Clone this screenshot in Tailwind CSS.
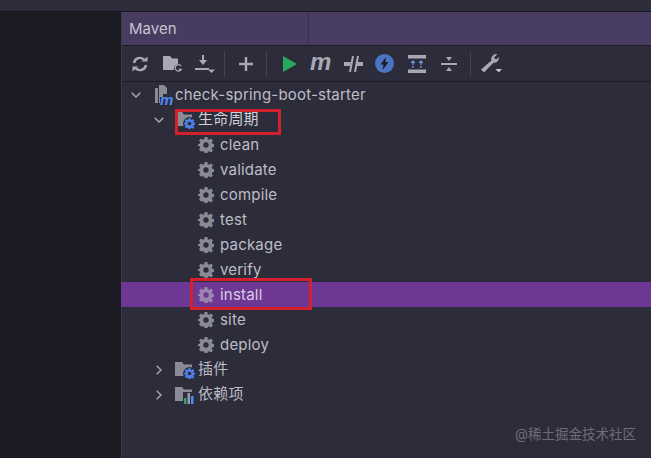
<!doctype html>
<html>
<head>
<meta charset="UTF-8">
<title>Maven</title>
<script src="https://cdn.jsdelivr.net/npm/@tailwindcss/browser@4"></script>
</head>
<body class="bg-[#2d2c3a]">
<svg class="hidden">
  <symbol id="gear" viewBox="0 0 16 16"><path fill="currentColor" fill-rule="evenodd" d="M6.600 0h2.800l.4 2.200 1.300.6L13 1.500l2 2-1.300 1.900.6 1.300 2.200.4v2.800l-2.200.4-.6 1.300 1.300 1.900-2 2-1.900-1.300-1.300.6-.4 2.200H6.600l-.4-2.200-1.300-.6L3 14.500l-2-2 1.300-1.900-.6-1.300L0 8.900V7.100l1.700-.4.6-1.300L1 3.500l2-2 1.900 1.300 1.300-.6zM8 5.300a2.700 2.700 0 1 0 0 5.400 2.700 2.700 0 0 0 0-5.400z"/></symbol>
  <symbol id="folder" viewBox="0 0 18 16"><path fill="#8b8b98" d="M0 1h7l2 2.500h8V15H0z"/></symbol>
  <symbol id="chev-d" viewBox="0 0 10 6"><path fill="none" stroke="#a9a9b4" stroke-width="1.400" d="M.7.700 5 5l4.300-4.300"/></symbol>
  <symbol id="chev-r" viewBox="0 0 6 10"><path fill="none" stroke="#a9a9b4" stroke-width="1.400" d="M.7.700 5 5 .7 9.300"/></symbol>
</svg>

<div class="h-[458px] flex flex-col overflow-hidden font-['Inter','Noto_Sans_CJK_SC',sans-serif] relative">
  <div class="h-3 shrink-0 bg-[#2e2d3b] border-b border-[#17161e]"></div>
  <div class="flex flex-1 min-h-0">
    <div class="w-[121px] shrink-0 bg-[#1c1b24]"></div>
    <div class="flex-1 flex flex-col border-l border-[#3a3948] bg-[#2d2c3a]">
      <!-- title -->
      <div class="h-[34px] shrink-0 flex bg-[#483b60] border-b border-[#1e1d26] text-[#c6c3cf] text-[15px]">
        <div class="w-[187px] pl-[7px] flex items-center border-r border-[#3a3050]"><span class="translate-y-px">Maven</span></div>
        <div class="flex-1 bg-[#493c62]"></div>
      </div>
      <!-- toolbar -->
      <div class="h-[36px] shrink-0 flex items-center pl-[10px] border-b border-[#1e1d26] text-[#a9a9b6]">
        <svg class="w-4 h-4" viewBox="0 0 16 16" fill="none" stroke="currentColor" stroke-width="2.400"><path d="M2 7a6 6 0 0 1 10.500-3M14 9a6 6 0 0 1-10.500 3"/><path fill="currentColor" stroke="none" d="M9.500 5.500h6v-5zM6.500 10.500h-6v5z"/></svg>
        <svg class="w-[20px] h-[18px] ml-[15px]" viewBox="0 0 20 18"><path fill="#a9a9b6" d="M0 1h7l2 2.500h6V9a5 5 0 0 0-4 6H0z"/><path fill="none" stroke="#a9a9b6" stroke-width="1.300" d="M18 11a3.200 3.200 0 1 0 .2 3.500h-2.500"/></svg>
        <svg class="w-[20px] h-[18px] ml-[12px]" viewBox="0 0 20 18"><path fill="none" stroke="#a9a9b6" stroke-width="2" d="M8 0v6M0 14h14"/><path fill="#a9a9b6" d="M4 5h8l-4 5zM13 14.500h7L16.500 18z"/></svg>
        <div class="w-px h-6 bg-[#454453] ml-[9px]"></div>
        <svg class="w-[14px] h-[14px] ml-[14px]" viewBox="0 0 14 14"><path fill="none" stroke="#a9a9b6" stroke-width="2.400" d="M7 0v14M0 7h14"/></svg>
        <div class="w-px h-6 bg-[#454453] ml-[13px]"></div>
        <svg class="w-[14px] h-[16px] ml-[16px]" viewBox="0 0 14 16"><path fill="#27a85f" d="M0 0l14 8-14 8z"/></svg>
        <span class="ml-[13px] w-[20px] font-['Liberation_Sans'] italic font-bold text-[24px] leading-none text-[#a9a9b6] -translate-y-[2px]">m</span>
        <svg class="w-[19px] h-[18px] ml-[14px]" viewBox="0 0 19 18"><path fill="none" stroke="#a9a9b6" stroke-width="2" d="M9 1 6 17M14 1l-3 16"/><path fill="#a9a9b6" d="M0 7h6.800l-.7 4H0zM12.500 7H19v4h-7.200z"/></svg>
        <svg class="w-[19px] h-[19px] ml-[12px]" viewBox="0 0 19 19"><circle cx="9.500" cy="9.500" r="9.500" fill="#4a74c4"/><path fill="#1b1b24" d="M11 3 5.500 10.500h3L7.500 16l6-8h-3.200z"/></svg>
        <svg class="w-[18px] h-[18px] ml-[14px]" viewBox="0 0 18 18"><path fill="#a9a9b6" d="M0 0h18v3.500H0zM0 14.500h18V18H0z"/><path fill="none" stroke="#6f95e6" stroke-width="1.300" stroke-dasharray="2 1" d="M5 13V7M13 13V7"/><path fill="#6f95e6" d="M5 5l2.500 3h-5zM13 5l2.500 3h-5z"/></svg>
        <svg class="w-[16px] h-[16px] ml-[15px]" viewBox="0 0 16 16"><path fill="#a9a9b6" d="M0 7h16v2H0zM5 1h6L8 5zM5 15h6l-3-4z"/></svg>
        <div class="w-px h-6 bg-[#454453] ml-[13px]"></div>
        <svg class="w-[21px] h-[19px] ml-[10px]" viewBox="0 0 21 19"><path fill="#a9a9b6" d="M15.500 0a5 5 0 0 0-5 6.500L0 15.500 3 18.500l9.500-9.800A5 5 0 0 0 18 3l-3 2.500-2-1.800L16 .5z"/><path fill="#c6c6d0" d="M14.500 15h6.500l-3.250 3.500z"/></svg>
      </div>
      <!-- tree -->
      <div class="flex-1 text-[#bdbdc6] text-[15px] tracking-[0.2px] relative">
        <div class="h-[25px] flex items-center pl-[9px]">
          <svg class="w-[10px] h-[6px]"><use href="#chev-d"/></svg>
          <span class="relative w-[19px] h-[20px] ml-[14px]">
            <svg class="w-[13px] h-[18px]" viewBox="0 0 13 18"><path fill="#8b8b98" d="M0 3h3v15H0zM4 0h5l3 3v6H8v3H5v6H4z"/></svg>
            <span class="absolute left-[5px] top-[7px] font-['Liberation_Sans'] italic font-bold text-[15px] leading-none text-[#4d8bf5]">m</span>
          </span>
          <span class="ml-[1px] translate-y-px">check-spring-boot-starter</span>
        </div>
        <div class="h-[25px] flex items-center pl-[32px]">
          <svg class="w-[10px] h-[6px]"><use href="#chev-d"/></svg>
          <span class="relative w-[20px] h-[18px] ml-[11px]">
            <svg class="w-[18px] h-[16px]"><use href="#folder"/></svg>
            <span class="absolute left-[8px] top-[6px] w-[13px] h-[13px] rounded-full bg-[#2d2c3a]"></span>
            <svg class="absolute left-[9px] top-[7px] w-[11px] h-[11px] text-[#4d7fe8]"><use href="#gear"/></svg>
          </span>
          <span class="ml-[3px] text-[#d0d0d8]">生命周期</span>
        </div>
        <div class="h-[25px] flex items-center pl-[76px]"><svg class="w-4 h-4 text-[#8a8a96]"><use href="#gear"/></svg><span class="ml-[6px] translate-y-px">clean</span></div>
        <div class="h-[25px] flex items-center pl-[76px]"><svg class="w-4 h-4 text-[#8a8a96]"><use href="#gear"/></svg><span class="ml-[6px] translate-y-px">validate</span></div>
        <div class="h-[25px] flex items-center pl-[76px]"><svg class="w-4 h-4 text-[#8a8a96]"><use href="#gear"/></svg><span class="ml-[6px] translate-y-px">compile</span></div>
        <div class="h-[25px] flex items-center pl-[76px]"><svg class="w-4 h-4 text-[#8a8a96]"><use href="#gear"/></svg><span class="ml-[6px] translate-y-px">test</span></div>
        <div class="h-[25px] flex items-center pl-[76px]"><svg class="w-4 h-4 text-[#8a8a96]"><use href="#gear"/></svg><span class="ml-[6px] translate-y-px">package</span></div>
        <div class="h-[25px] flex items-center pl-[76px]"><svg class="w-4 h-4 text-[#8a8a96]"><use href="#gear"/></svg><span class="ml-[6px] translate-y-px">verify</span></div>
        <div class="h-[25px] -ml-px flex items-center pl-[77px] bg-[#6f3794] text-[#d4cfe0]"><svg class="w-4 h-4 text-[#9a86ac]"><use href="#gear"/></svg><span class="ml-[6px] translate-y-px">install</span></div>
        <div class="h-[25px] flex items-center pl-[76px]"><svg class="w-4 h-4 text-[#8a8a96]"><use href="#gear"/></svg><span class="ml-[6px] translate-y-px">site</span></div>
        <div class="h-[25px] flex items-center pl-[76px]"><svg class="w-4 h-4 text-[#8a8a96]"><use href="#gear"/></svg><span class="ml-[6px] translate-y-px">deploy</span></div>
        <div class="h-[25px] flex items-center pl-[34px]">
          <svg class="w-[6px] h-[10px]"><use href="#chev-r"/></svg>
          <span class="relative w-[20px] h-[18px] ml-[13px]">
            <svg class="w-[18px] h-[16px]"><use href="#folder"/></svg>
            <span class="absolute left-[8px] top-[6px] w-[13px] h-[13px] rounded-full bg-[#2d2c3a]"></span>
            <svg class="absolute left-[9px] top-[7px] w-[11px] h-[11px] text-[#4d7fe8]"><use href="#gear"/></svg>
          </span>
          <span class="ml-[3px]">插件</span>
        </div>
        <div class="h-[25px] flex items-center pl-[34px]">
          <svg class="w-[6px] h-[10px]"><use href="#chev-r"/></svg>
          <span class="relative w-[20px] h-[18px] ml-[13px]">
            <svg class="w-[18px] h-[16px]"><use href="#folder"/></svg>
            <svg class="absolute left-[8px] top-[6px] w-[11px] h-[12px]" viewBox="0 0 11 12"><path fill="#2d2c3a" d="M0 0h11v12H0z"/><path fill="#2fa36b" d="M1 6h2.500v6H1z"/><path fill="#9a9aa6" d="M4.500 1H7v11H4.500z"/><path fill="#4d8bf5" d="M8 4h2.500v8H8z"/></svg>
          </span>
          <span class="ml-[3px]">依赖项</span>
        </div>
      </div>
    </div>
  </div>

  <!-- red annotation boxes drawn over the screenshot -->
  <div class="absolute left-[175px] top-[109px] w-[106px] h-[26px] border-[3px] border-[#d4202c]"></div>
  <div class="absolute left-[190px] top-[278px] w-[122px] h-[32px] border-[3px] border-[#d4202c]"></div>
  <div class="absolute right-[15px] top-[426px] text-[13.5px] leading-4 text-[#6d6c78]">@稀土掘金技术社区</div>
</div>
</body>
</html>
